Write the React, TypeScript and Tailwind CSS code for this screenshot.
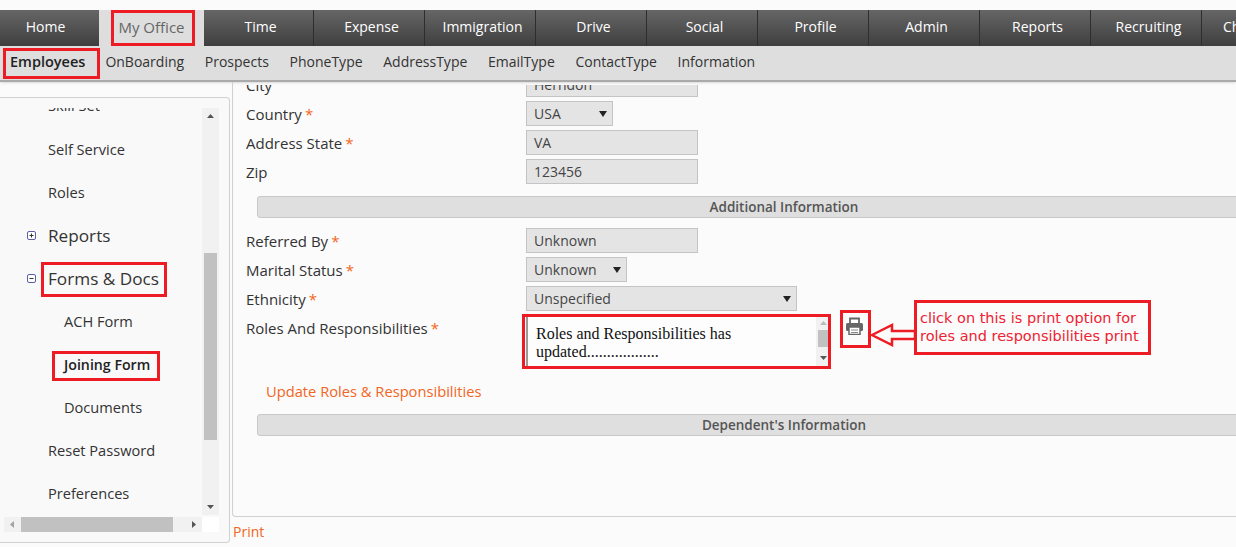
const tabs = ['Time', 'Expense', 'Immigration', 'Drive', 'Social', 'Profile', 'Admin', 'Reports', 'Recruiting'];
const subTabs = ['OnBoarding', 'Prospects', 'PhoneType', 'AddressType', 'EmailType', 'ContactType', 'Information'];

function Required() {
  return <span className="ml-[3px] text-[#f26522]">*</span>;
}

function FormRow({ label, required, children }: { label: string; required?: boolean; children: React.ReactNode }) {
  return (
    <div className="flex h-[29px] items-center">
      <label className="w-[280px] shrink-0 pt-[2px] text-[15px] text-[#333]">
        {label}
        {required && <Required />}
      </label>
      {children}
    </div>
  );
}

function TextBox({ value }: { value: string }) {
  return (
    <div className="box-border flex h-[25px] w-[172px] items-center border border-[#c4c4c4] bg-[#e4e4e4] pl-[7px] text-[14px] text-[#444]">
      {value}
    </div>
  );
}

function SelectBox({ value, width }: { value: string; width: string }) {
  return (
    <div className={`box-border flex h-[25px] items-center justify-between border border-[#c4c4c4] bg-[#e4e4e4] pl-[7px] pr-[5px] text-[14px] text-[#444] ${width}`}>
      {value}
      <svg width="8" height="6" viewBox="0 0 8 6"><path d="M0 0h8L4 6z" fill="#222" /></svg>
    </div>
  );
}

function SectionBar({ title }: { title: string }) {
  return (
    <div className="ml-[11px] flex h-[22px] w-[1054px] items-center justify-center rounded-[3px] border border-[#c8c8c8] bg-[#dfdfdf] text-[13.5px] font-semibold text-[#555]">
      {title}
    </div>
  );
}

function SideLink({ label, className = '' }: { label: React.ReactNode; className?: string }) {
  return <div className={`flex h-[43px] items-center text-[14.6px] text-[#333] ${className}`}>{label}</div>;
}

function SideGroup({ label, open }: { label: string; open?: boolean }) {
  return (
    <div className="flex h-[43px] items-center pl-[27px] text-[17.2px] text-[#333]">
      <svg width="10" height="10" viewBox="0 0 10 10" className="mr-[11px] shrink-0">
        <rect x="0.5" y="0.5" width="8" height="8" rx="1.5" fill="#fff" stroke="#5a5fa8" />
        <path d={open ? 'M2.5 4.5h4' : 'M2.5 4.5h4M4.5 2.5v4'} stroke="#333" />
      </svg>
      {label}
    </div>
  );
}

function PrintIcon() {
  return (
    <svg width="17" height="18" viewBox="0 0 17 18" className="ml-[15px] mt-[3px] shrink-0">
      <path d="M4 6V1.500h9V6" fill="#fff" stroke="#666" strokeWidth="1.800" />
      <rect x="0" y="6" width="17" height="8" rx="1.500" fill="#666" />
      <rect x="3" y="10" width="11" height="7.500" fill="#fff" stroke="#666" strokeWidth="1.500" />
      <path d="M5 13h7M5 15.500h7" stroke="#888" />
    </svg>
  );
}

export default function App() {
  return (
    <div className="relative h-[547px] w-[1236px] overflow-hidden bg-[#fbfbfb] pt-[10px] font-['Open_Sans',sans-serif]">
      <nav className="flex h-[36px] overflow-hidden bg-gradient-to-b from-[#666] to-[#3f3f3f] text-[14px] text-white">
        <div className="flex w-[99px] shrink-0 items-center justify-center pb-[4px] pr-[8px]">Home</div>
        <div className="flex w-[105px] shrink-0 items-center justify-center bg-[#dedede] pb-[2px] text-[15px] text-[#666]">My Office</div>
        <div className="-ml-px flex w-0 shrink-0" />
        {tabs.map((t) => (
          <div key={t} className="flex w-[111px] shrink-0 items-center justify-center border-r border-[#2e2e2e] pb-[4px] pl-[5px]">{t}</div>
        ))}
        <div className="shrink-0 self-center pb-[4px] pl-[21px]">Chat</div>
      </nav>

      <div className="flex h-[36px] items-center border-b-2 border-[#aaa] bg-[#dedede] pb-[3px] text-[14px] text-[#333] shadow-sm">
        <span className="ml-[10px] mr-[20px] text-[14.5px] font-semibold text-[#222]">Employees</span>
        {subTabs.map((t) => (
          <span key={t} className="mr-[20.7px]">{t}</span>
        ))}
      </div>

      <div className="flex h-[465px]">
        <aside className="mt-[15px] box-border h-[446px] w-[230px] shrink-0 rounded-br-[4px] rounded-tr-[4px] border-b border-r border-t border-[#d0d0d0] bg-[#f9f9f9] pt-[10px]">
          <div className="flex h-[407px] w-[219px]">
            <div className="h-full w-[202px] overflow-hidden">
              <div className="-mt-[24px] pl-[48px]">
                <SideLink label="Skill Set" className="h-[44px]" />
                <SideLink label="Self Service" />
                <SideLink label="Roles" />
                <div className="-ml-[48px]">
                  <SideGroup label="Reports" />
                  <SideGroup label="Forms & Docs" open />
                </div>
                <SideLink label="ACH Form" className="pl-[16px]" />
                <SideLink label={<span className="text-[14.2px] font-semibold text-[#222]">Joining Form</span>} className="pl-[16px]" />
                <SideLink label="Documents" className="pl-[16px]" />
                <SideLink label="Reset Password" />
                <SideLink label="Preferences" />
              </div>
            </div>
            <div className="relative h-full w-[17px] bg-[#f1f1f1]">
              <svg width="7" height="4" viewBox="0 0 7 4" className="absolute left-[5px] top-[6px]"><path d="M0 4h7L3.5 0z" fill="#555" /></svg>
              <div className="absolute left-[2px] top-[145px] h-[187px] w-[13px] bg-[#c1c1c1]" />
              <svg width="7" height="4" viewBox="0 0 7 4" className="absolute bottom-[6px] left-[5px]"><path d="M0 0h7L3.5 4z" fill="#555" /></svg>
            </div>
          </div>
          <div className="mt-[2px] flex h-[15px] w-[219px]">
            <div className="relative ml-[4px] h-full w-[198px] bg-[#f1f1f1]">
              <svg width="4" height="7" viewBox="0 0 4 7" className="absolute left-[6px] top-[4px]"><path d="M4 0v7L0 3.500z" fill="#a3a3a3" /></svg>
              <div className="absolute left-[17px] top-0 h-full w-[152px] bg-[#c1c1c1]" />
              <svg width="4" height="7" viewBox="0 0 4 7" className="absolute right-[6px] top-[4px]"><path d="M0 0v7l4-3.500z" fill="#555" /></svg>
            </div>
            <div className="w-[17px] bg-white" />
          </div>
        </aside>

        <main className="ml-[2px] w-[1004px] shrink-0">
          <div className="box-border h-[435px] rounded-bl-[4px] border-b border-l border-[#d0d0d0] pl-[13px] pt-[3px]">
            <div className="h-[431px] overflow-hidden">
              <div className="-mt-[15px]">
                <FormRow label="City"><TextBox value="Herndon" /></FormRow>
                <FormRow label="Country" required><SelectBox value="USA" width="w-[87px]" /></FormRow>
                <FormRow label="Address State" required><TextBox value="VA" /></FormRow>
                <FormRow label="Zip"><TextBox value="123456" /></FormRow>
                <div className="mb-[8px] mt-[10px]"><SectionBar title="Additional Information" /></div>
                <FormRow label="Referred By" required><TextBox value="Unknown" /></FormRow>
                <FormRow label="Marital Status" required><SelectBox value="Unknown" width="w-[101px]" /></FormRow>
                <FormRow label="Ethnicity" required><SelectBox value="Unspecified" width="w-[271px]" /></FormRow>
                <div className="mt-[1px] flex h-[52px] items-start">
                  <label className="w-[280px] shrink-0 pt-[3px] text-[15px] text-[#333]">
                    Roles And Responsibilities<Required />
                  </label>
                  <div className="relative box-border h-[52px] w-[305px] border-l-2 border-[#999] bg-[#fdfdfd] pl-[8px] pt-[11px] font-['Liberation_Serif',serif] text-[16px] leading-[18px] text-[#111]">
                    <p className="w-[270px]">Roles and Responsibilities has updated..................</p>
                    <div className="absolute right-0 top-0 h-full w-[15px] bg-[#f1f1f1]">
                      <svg width="7" height="4" viewBox="0 0 7 4" className="absolute left-[4px] top-[7px]"><path d="M0 4h7L3.5 0z" fill="#bbb" /></svg>
                      <div className="absolute left-[2px] top-[16px] h-[17px] w-[11px] bg-[#c1c1c1]" />
                      <svg width="7" height="4" viewBox="0 0 7 4" className="absolute bottom-[6px] left-[4px]"><path d="M0 0h7L3.5 4z" fill="#555" /></svg>
                    </div>
                  </div>
                  <PrintIcon />
                </div>
                <div className="ml-[20px] mt-[14px] text-[14.7px] text-[#f26522]">Update Roles &amp; Responsibilities</div>
                <div className="mt-[12px]"><SectionBar title="Dependent's Information" /></div>
              </div>
            </div>
          </div>
          <div className="ml-px mt-[4px] text-[14px] text-[#f26522]">Print</div>
        </main>
      </div>

      {/* red annotations drawn over the screenshot */}
      <div className="absolute left-[111px] top-[10px] h-[36px] w-[84px] border-[3px] border-[#ed1c24]" />
      <div className="absolute left-[3px] top-[48px] h-[31px] w-[97px] border-[3px] border-[#ed1c24]" />
      <div className="absolute left-[41px] top-[262px] h-[35px] w-[126px] border-[3px] border-[#ed1c24]" />
      <div className="absolute left-[52px] top-[351px] h-[30px] w-[108px] border-[3px] border-[#ed1c24]" />
      <div className="absolute left-[522px] top-[314px] h-[55px] w-[309px] border-[3px] border-[#ed1c24]" />
      <div className="absolute left-[840px] top-[310px] h-[38px] w-[31px] border-[3px] border-[#ed1c24]" />
      <svg width="46" height="24" viewBox="0 0 46 24" className="absolute left-[869px] top-[323px]">
        <path d="M3 12 23 2v6h23v8H23v6z" fill="#fbfbfb" stroke="#ed1c24" strokeWidth="2.500" />
      </svg>
      <div className="absolute left-[914px] top-[300px] box-border h-[55px] w-[237px] border-[3px] border-[#ed1c24] bg-[#fbfbfb] pl-[3px] pt-[6px] font-['DejaVu_Sans',sans-serif] text-[14.5px] leading-[18px] text-[#ee2233]">
        click on this is print option for roles and responsibilities print
      </div>
    </div>
  );
}
